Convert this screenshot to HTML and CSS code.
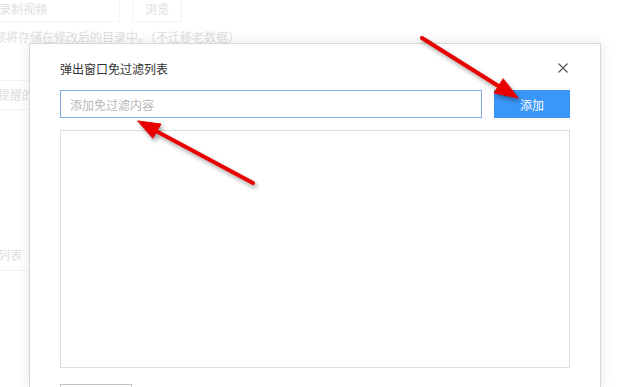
FILE: index.html
```html
<!DOCTYPE html>
<html lang="zh">
  <head>
    <meta charset="UTF-8" />
    <title>弹出窗口免过滤列表</title>
    <link rel="stylesheet" href="styles.css">
  </head>
  <body>
    <!-- faded settings page behind the dialog -->
    <div class="page">
      <div class="row-path">
        <div class="path-box">录制视频</div>
        <div class="browse">浏览</div>
      </div>
      <div class="note">频将存储在修改后的目录中。（不迁移老数据）</div>
      <div class="line-box">提醒的</div>
      <div class="line-box list-line">列表</div>
    </div>

    <!-- dialog -->
    <div class="dialog">
      <div class="dialog-head">
        <span class="dialog-title">弹出窗口免过滤列表</span>
        <svg class="close" width="10" height="10" viewBox="0 0 10 10">
          <path d="M0.5 0.5 L9.5 9.5 M9.5 0.5 L0.5 9.5" stroke="#555" stroke-width="1.2" fill="none" />
        </svg>
      </div>
      <div class="add-row">
        <input class="add-input" type="text" placeholder="添加免过滤内容" />
        <button class="btn-add">添加</button>
      </div>
      <div class="list"></div>
      <div class="footer">
        <button class="btn-plain"></button>
      </div>
    </div>

    <!-- annotation arrows -->
    <svg class="arrows" width="629" height="387" viewBox="0 0 629 387">
      <g fill="#e80000" stroke="#e80000" stroke-linecap="round" stroke-linejoin="round">
        <line x1="422" y1="38" x2="500" y2="87" stroke-width="4" />
        <polygon points="518,98 494,93 503,79" stroke-width="1" />
        <line x1="253" y1="183" x2="156" y2="131" stroke-width="4" />
        <polygon points="138,121 161,124 153,138" stroke-width="1" />
      </g>
    </svg>
  </body>
</html>
```

FILE: styles.css
```css
body {
  margin: 0;
  background: #fff;
  font-family: "Microsoft YaHei", "Noto Sans CJK SC", sans-serif;
  font-size: 12px;
  overflow: hidden;
  width: 629px;
  height: 387px;
  position: relative;
}

/* background page */
.page {
  color: #dedede;
  font-size: 12px;
  margin-left: -8px;
}

.row-path {
  display: flex;
  gap: 12px;
  height: 22px;
}

.path-box {
  width: 128px;
  line-height: 18px;
  border: 1px solid #f4f4f4;
  border-top: none;
  padding-left: 6px;
  box-sizing: border-box;
}

.browse {
  width: 48px;
  line-height: 18px;
  text-align: center;
  border: 1px solid #f2f2f2;
  border-top: none;
}

.note {
  margin-top: 6px;
  padding-left: 2px;
  line-height: 18px;
}

.line-box {
  margin-top: 34px;
  height: 28px;
  line-height: 28px;
  width: 44px;
  border-top: 1px solid #f4f4f4;
  border-bottom: 1px solid #f4f4f4;
  padding-left: 6px;
}

.list-line {
  margin-top: 130px;
  border-top: none;
  height: 30px;
  line-height: 30px;
}

/* dialog */
.dialog {
  position: absolute;
  left: 29px;
  top: 43px;
  width: 510px;
  height: 344px;
  padding: 0 30px;
  overflow: hidden;
  background: #fff;
  border: 1px solid #d8d8d8;
  border-bottom: none;
  box-shadow: 0 0 12px rgba(0, 0, 0, 0.1);
}

.dialog-head {
  display: flex;
  justify-content: space-between;
  align-items: center;
  padding-top: 16px;
  height: 18px;
}

.dialog-title {
  color: #333;
  font-size: 12px;
  line-height: 18px;
}

.close {
  margin-right: 2px;
  margin-top: -2px;
}

.add-row {
  display: flex;
  gap: 12px;
  margin-top: 12px;
}

.add-input {
  width: 422px;
  height: 28px;
  box-sizing: border-box;
  border: 1px solid #7eaee6;
  padding: 0 9px;
  font-family: inherit;
  font-size: 12px;
  outline: none;
}

.add-input::placeholder {
  color: #b8b8b8;
}

.btn-add {
  width: 76px;
  height: 28px;
  border: none;
  background: #3a97f7;
  color: #fff;
  font-family: inherit;
  font-size: 12px;
  padding: 0;
}

.list {
  margin-top: 12px;
  height: 236px;
  border: 1px solid #dcdcdc;
}

.footer {
  margin-top: 16px;
}

.btn-plain {
  width: 72px;
  height: 26px;
  border: 1px solid #c4c4c4;
  background: #fff;
}

/* annotations */
.arrows {
  position: absolute;
  left: 0;
  top: 0;
  filter: drop-shadow(2px 3px 2px rgba(0, 0, 0, 0.35));
}
```
